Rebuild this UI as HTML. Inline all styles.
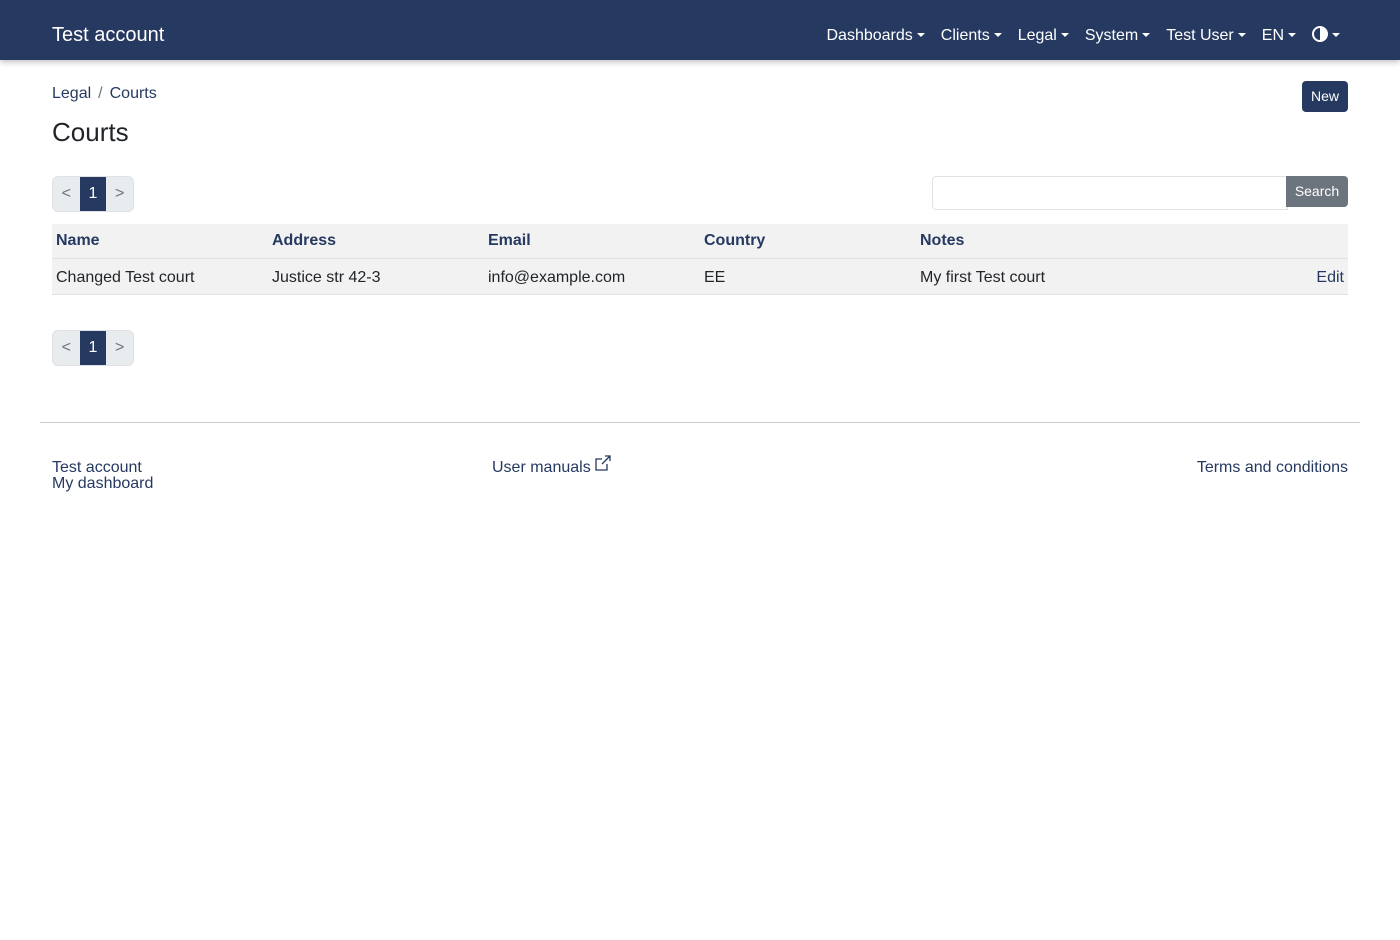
<!DOCTYPE html>
<html><head><style>
*{box-sizing:border-box}
body{margin:0;font-family:"Liberation Sans",sans-serif;color:#212529;font-size:16px;background:#fff}
.nav{height:60px;background:#263961;box-shadow:0 2px 6px rgba(0,0,0,.25);position:relative;color:#fff}
.brand{position:absolute;left:52px;top:23px;font-size:20px;line-height:24px}
.menu{position:absolute;right:60px;top:26px;display:flex;font-size:16px;line-height:20px}
.menu span{margin-left:16px;white-space:nowrap}
.menu span:after{content:"";display:inline-block;margin-left:4px;vertical-align:3px;border-top:4px solid #fff;border-left:4px solid transparent;border-right:4px solid transparent}
.a{color:#263961}
.abs{position:absolute}
.pg{position:absolute;left:52px;width:82px;height:36px;background:#e9ecef;border:1px solid #dee2e6;border-radius:6px;overflow:hidden;display:flex}
.pg div{width:27px;text-align:center;line-height:34px;color:#6c757d;font-size:16px}
.pg .on{background:#263961;color:#fff}
table{position:absolute;left:52px;top:224px;width:1296px;border-collapse:collapse;background:#f2f2f2}
td,th{text-align:left;padding:0 4px;font-size:16px}
th{height:34px;color:#263961;border-bottom:1px solid #dee2e6;padding-top:1px}
td{height:36px;border-bottom:1px solid #dee2e6;padding-top:3px}
</style></head><body>
<div class="nav"><div class="brand">Test account</div>
<div class="menu"><span>Dashboards</span><span>Clients</span><span>Legal</span><span>System</span><span>Test User</span><span>EN</span><span><svg width="16" height="16" viewBox="0 0 16 16" style="vertical-align:-2px"><circle cx="8" cy="8" r="7" fill="none" stroke="#fff" stroke-width="2"/><path d="M8 1a7 7 0 0 1 0 14z" fill="#fff"/></svg></span></div></div>
<div class="abs" style="left:52px;top:84px;line-height:20px"><span class="a">Legal</span><span style="color:#6c757d;margin:0 7px">/</span><span class="a">Courts</span></div>
<div class="abs" style="left:1302px;top:81px;width:46px;height:31px;background:#263961;color:#fff;border-radius:4px;font-size:14px;text-align:center;line-height:31px">New</div>
<div class="abs" style="left:52px;top:117px;font-size:26px;line-height:30px">Courts</div>
<div class="pg" style="top:176px"><div>&lt;</div><div class="on">1</div><div>&gt;</div></div>
<div class="abs" style="left:932px;top:176px;width:356px;height:34px;border:1px solid #dee2e6;border-radius:4px 0 0 4px"></div>
<div class="abs" style="left:1286px;top:176px;width:62px;height:31px;background:#6c757d;color:#fff;border-radius:0 4px 4px 0;font-size:14px;text-align:center;line-height:31px">Search</div>
<table><tr><th style="width:216px">Name</th><th style="width:216px">Address</th><th style="width:216px">Email</th><th style="width:216px">Country</th><th>Notes</th><th></th></tr>
<tr><td>Changed Test court</td><td>Justice str 42-3</td><td>info@example.com</td><td>EE</td><td>My first Test court</td><td style="text-align:right" class="a">Edit</td></tr></table>
<div class="pg" style="top:330px"><div>&lt;</div><div class="on">1</div><div>&gt;</div></div>
<div class="abs" style="left:40px;top:422px;width:1320px;border-top:1px solid #ccc"></div>
<div class="abs a" style="left:52px;top:460px;line-height:16px"><div>Test account</div><div>My dashboard</div></div>
<div class="abs a" style="left:492px;top:455px;line-height:18px">User manuals <svg width="16" height="16" viewBox="0 0 16 16" style="vertical-align:1px"><path d="M12 9v6H1V4h6M10 1h5v5M15 1L7 9" fill="none" stroke="#263961" stroke-width="1.3"/></svg></div>
<div class="abs a" style="right:52px;top:459px;line-height:18px">Terms and conditions</div>
</body></html>
